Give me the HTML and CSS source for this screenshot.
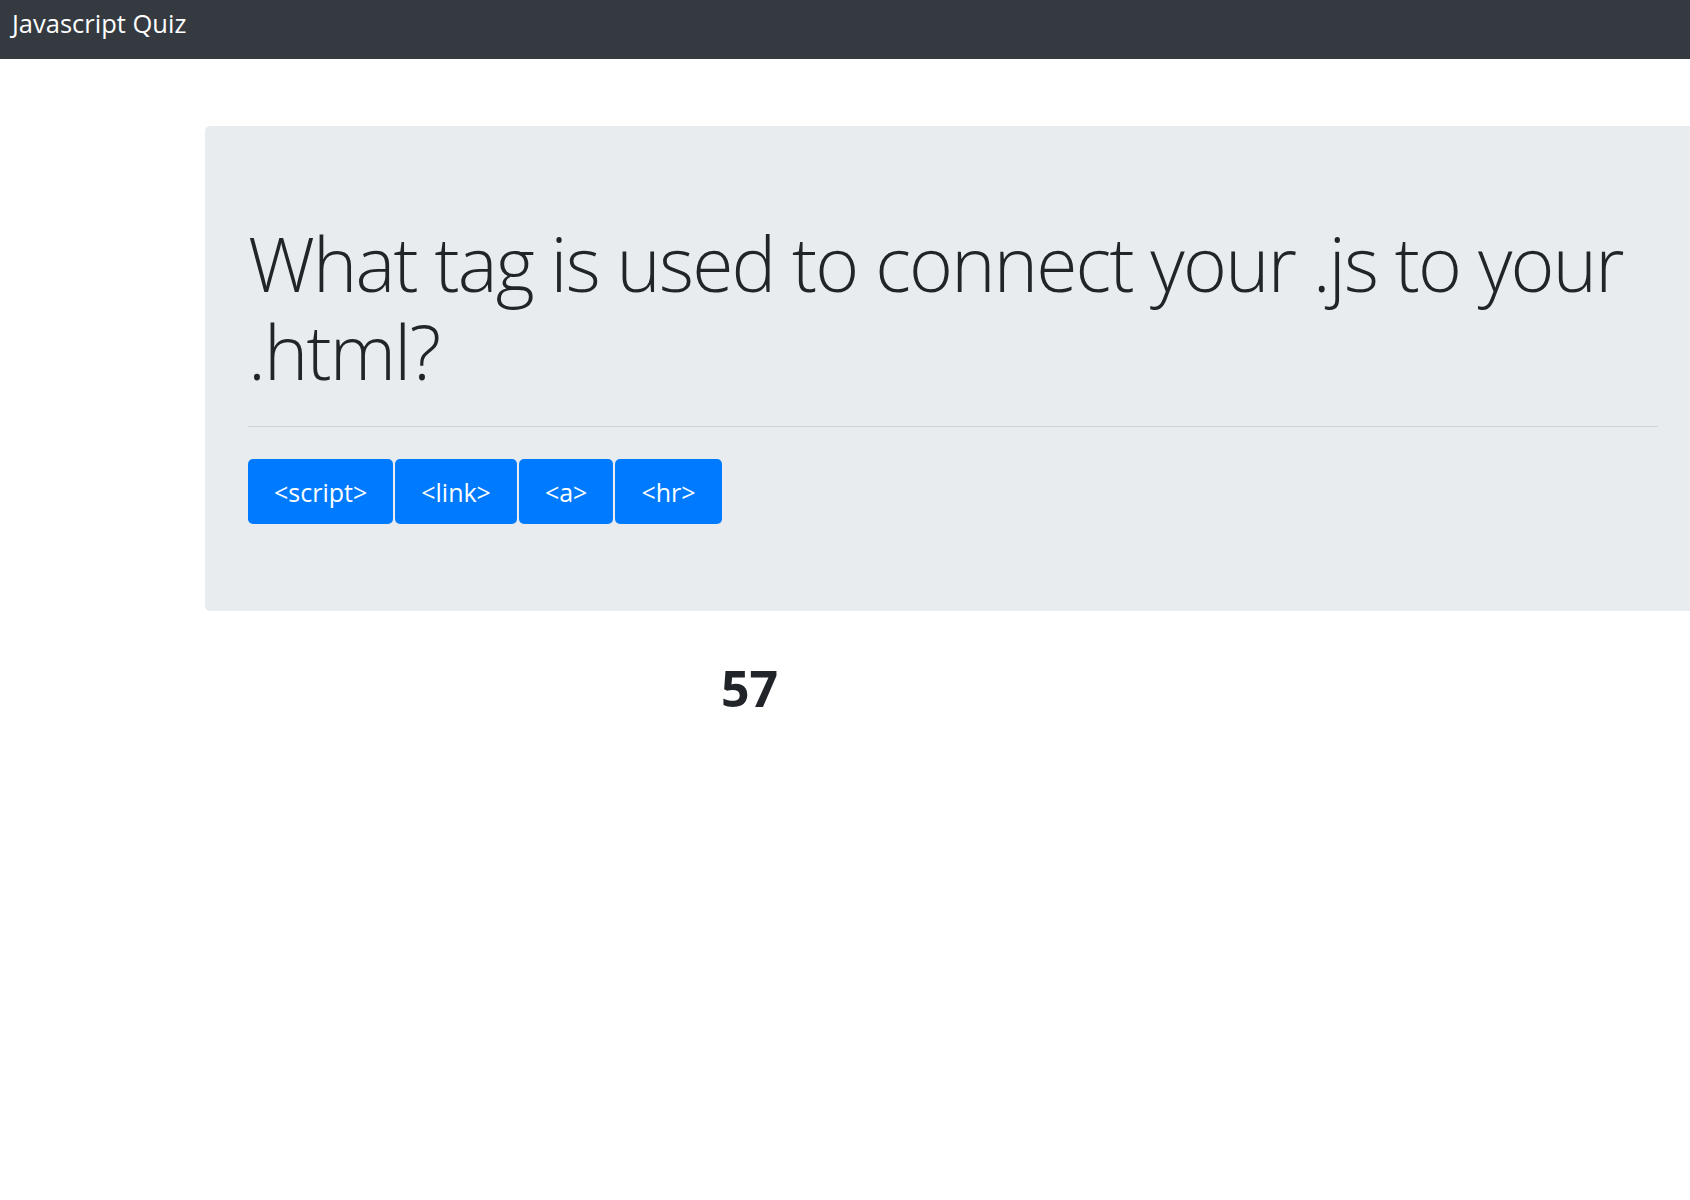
FILE: index.html
```html
<!DOCTYPE html>
<html lang="en">
<head>
<meta charset="utf-8">
<title>Javascript Quiz</title>
<link rel="stylesheet" href="styles.css">
</head>
<body>
<nav class="navbar"><span class="brand">Javascript Quiz</span></nav>
<main class="main">
  <section class="jumbotron">
    <h1 class="question">What tag is used to connect your .js to your .html?</h1>
    <hr class="divider">
    <div class="answers">
      <button class="btn">&lt;script&gt;</button>
      <button class="btn">&lt;link&gt;</button>
      <button class="btn">&lt;a&gt;</button>
      <button class="btn">&lt;hr&gt;</button>
    </div>
  </section>
  <div class="timer">57</div>
</main>
</body>
</html>
```
FILE: styles.css
```css
html { overflow-x: hidden; }
body {
  margin: 0;
  font-family: "Open Sans", "Noto Sans", sans-serif;
  color: #212529;
  background: #fff;
}
.navbar {
  height: 59px;
  background: #343a40;
  display: flex;
  align-items: center;
  padding: 0 12px;
  box-sizing: border-box;
}
.brand {
  color: #fff;
  font-size: 25.5px;
  line-height: 1;
  margin-top: -12px;
}
.main {
  padding: 67px 0 0 205px;
}
.jumbotron {
  width: 1496px;
  box-sizing: border-box;
  background: #e9ecef;
  border-radius: 5px;
  padding: 93px 43px 87px 43px;
}
.question {
  margin: 0;
  font-weight: 300;
  font-size: 75px;
  letter-spacing: -1.8px;
  line-height: 88px;
  color: #212529;
}
.divider {
  margin: 31px 0 32px;
  border: 0;
  border-top: 1px solid #d1d4d7;
}
.answers {
  display: flex;
  gap: 2px;
}
.btn {
  height: 65px;
  padding: 0 26px;
  background: #007bff;
  color: #fff;
  border: 0;
  border-radius: 5px;
  font-family: "Open Sans", "Noto Sans", sans-serif;
  font-size: 25px;
}
.timer {
  margin: 47px 0 0 516px;
  font-size: 50px;
  font-weight: 700;
  line-height: 1.2;
}
```
